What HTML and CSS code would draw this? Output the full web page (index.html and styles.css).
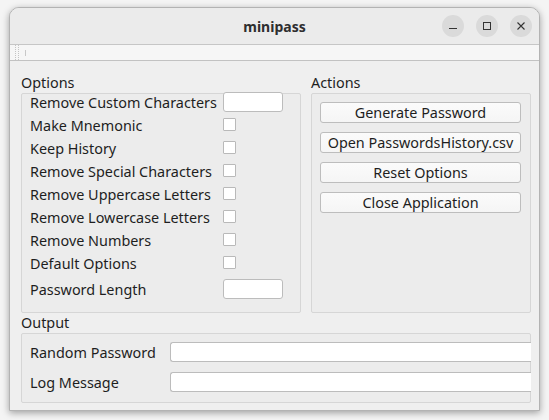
FILE: index.html
```html
<!DOCTYPE html>
<html>
<head>
<meta charset="utf-8">
<title>minipass</title>
<link rel="stylesheet" href="styles.css">
</head>
<body>
<div class="window">
  <div class="titlebar">
    <span class="title">minipass</span>
    <div class="wbtns">
      <span class="wbtn"><svg width="10" height="10" viewBox="0 0 10 10"><line x1="1" y1="7.5" x2="9" y2="7.5" stroke="#333" stroke-width="1"/></svg></span>
      <span class="wbtn"><svg width="10" height="10" viewBox="0 0 10 10"><rect x="1.5" y="1.5" width="7" height="7" fill="none" stroke="#333" stroke-width="1"/></svg></span>
      <span class="wbtn"><svg width="10" height="10" viewBox="0 0 10 10"><path d="M1.5 1.5 L8.5 8.5 M8.5 1.5 L1.5 8.5" stroke="#333" stroke-width="1.1"/></svg></span>
    </div>
  </div>
  <div class="toolbar"><span class="grip"></span><span class="sep"></span></div>
  <div class="content">
    <div class="top">
      <section class="group">
        <div class="glabel">Options</div>
        <div class="gbox options">
          <div class="rows">
            <div class="row"><span class="lbl">Remove Custom Characters</span><span class="field small"></span></div>
            <div class="row"><span class="lbl">Make Mnemonic</span><span class="check"></span></div>
            <div class="row"><span class="lbl">Keep History</span><span class="check"></span></div>
            <div class="row"><span class="lbl">Remove Special Characters</span><span class="check"></span></div>
            <div class="row"><span class="lbl">Remove Uppercase Letters</span><span class="check"></span></div>
            <div class="row"><span class="lbl">Remove Lowercase Letters</span><span class="check"></span></div>
            <div class="row"><span class="lbl">Remove Numbers</span><span class="check"></span></div>
            <div class="row"><span class="lbl">Default Options</span><span class="check"></span></div>
            <div class="row last"><span class="lbl">Password Length</span><span class="field small"></span></div>
          </div>
        </div>
      </section>
      <section class="group">
        <div class="glabel">Actions</div>
        <div class="gbox actions">
          <button class="btn">Generate Password</button>
          <button class="btn">Open PasswordsHistory.csv</button>
          <button class="btn">Reset Options</button>
          <button class="btn">Close Application</button>
        </div>
      </section>
    </div>
    <section class="group">
      <div class="glabel">Output</div>
      <div class="gbox output">
        <div class="orow"><span class="lbl">Random Password</span><span class="field wide"></span></div>
        <div class="orow"><span class="lbl">Log Message</span><span class="field wide"></span></div>
      </div>
    </section>
  </div>
</div>
</body>
</html>
```
FILE: styles.css
```css
* { box-sizing: border-box; }
html, body { margin: 0; padding: 0; }
body {
  background: #f4f4f4;
  font-family: "Noto Sans", "Open Sans", sans-serif;
  font-size: 14.4px;
  color: #1e1e1e;
  width: 549px;
  height: 420px;
  overflow: hidden;
}
.window {
  margin: 7px 0 0 9px;
  width: 531px;
  height: 404px;
  border: 1px solid #b3b3b3;
  border-radius: 10px 10px 0 0;
  background: #efefef;
  box-shadow: 0 2px 7px rgba(0,0,0,0.35);
  overflow: hidden;
  display: flex;
  flex-direction: column;
}
.titlebar {
  height: 37px;
  flex: none;
  background: #ebebeb;
  border-bottom: 1px solid #c6c6c6;
  display: grid;
  grid-template-columns: 1fr auto 1fr;
  align-items: center;
  padding-right: 7px;
}
.title {
  grid-column: 2;
  font-weight: bold;
  font-size: 14px;
  color: #2e2e2e;
  padding-left: 7px;
}
.wbtns {
  grid-column: 3;
  justify-self: end;
  display: flex;
  gap: 12px;
}
.wbtn {
  width: 22px;
  height: 22px;
  border-radius: 50%;
  background: #dadada;
  display: flex;
  align-items: center;
  justify-content: center;
}
.toolbar {
  height: 16px;
  flex: none;
  background: #f6f6f6;
  border-bottom: 1px solid #c2c2c2;
  display: flex;
  align-items: center;
  padding-left: 5px;
}
.grip {
  width: 4px;
  height: 15px;
  border-left: 1px dotted #c4c4c4;
  border-right: 1px dotted #c4c4c4;
}
.sep {
  width: 1px;
  height: 6px;
  background: #c8c8c8;
  margin-left: 6px;
}
.content {
  flex: 1;
  padding: 12px 8px 7px 11px;
  display: flex;
  flex-direction: column;
}
.top {
  display: grid;
  grid-template-columns: 280px 220px;
  column-gap: 10px;
}
.glabel {
  height: 17px;
  line-height: 17px;
  margin-bottom: 3px;
  padding-top: 1px;
}
.gbox {
  border: 1px solid #d6d6d6;
  border-radius: 2px;
  background: #ececec;
}
.lbl { padding-top: 1px; }
.options { height: 220px; padding-left: 8px; }
.rows { margin-top: -4px; }
.row {
  height: 23px;
  display: grid;
  grid-template-columns: 193px auto;
  align-items: center;
  white-space: nowrap;
}
.row.last { margin-top: 3px; }
.field {
  display: block;
  background: #fff;
  border: 1px solid #bcbcbc;
  border-radius: 3px;
  height: 20px;
}
.field.small { width: 60px; }
.check {
  display: block;
  width: 13px;
  height: 13px;
  background: #fff;
  border: 1px solid #b9b9b9;
  border-radius: 1px;
}
.actions {
  height: 220px;
  padding: 8px 9px 0 8px;
  display: flex;
  flex-direction: column;
  gap: 9px;
}
.btn {
  height: 21px;
  font: inherit;
  color: inherit;
  background: linear-gradient(#fbfbfb, #f5f5f5);
  border: 1px solid #bdbdbd;
  border-radius: 3px;
  padding: 0;
  line-height: 19px;
}
.output {
  height: 70px;
  padding: 8px 0 0 8px;
  display: flex;
  flex-direction: column;
  gap: 10px;
}
.orow {
  height: 20px;
  display: grid;
  grid-template-columns: 140px 1fr;
  align-items: center;
  margin-right: -1px;
  white-space: nowrap;
}
.field.wide {
  border-right: 0;
  border-radius: 3px 0 0 3px;
}
```
